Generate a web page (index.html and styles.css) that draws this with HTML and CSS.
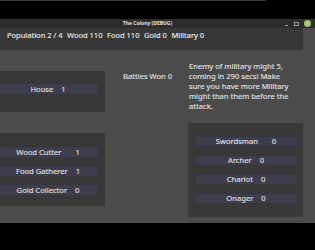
FILE: index.html
```html
<!DOCTYPE html>
<html>
<head>
<meta charset="utf-8">
<link rel="stylesheet" href="styles.css">
</head>
<body>
<div class="topline"></div>
<div class="titlebar">
  <div class="title">The Colony (DEBUG)</div>
  <div class="wbtns">
    <span class="wmin"></span>
    <span class="wmax"></span>
    <span class="wclose"><svg width="7" height="7" viewBox="0 0 7 7"><circle cx="3.5" cy="3.5" r="3.3" fill="#93b84f" stroke="#b5d67a" stroke-width="0.6"/><path d="M2.3 2.3 L4.7 4.7 M4.7 2.3 L2.3 4.7" stroke="#ffffff" stroke-width="0.8"/></svg></span>
  </div>
</div>
<div class="window">
  <div class="stats">
    <span>Population 2 / 4</span>
    <span>Wood 110</span>
    <span>Food 110</span>
    <span>Gold 0</span>
    <span>Military 0</span>
  </div>
  <div class="content">
    <div class="leftcol">
      <div class="panel p-house">
        <div class="btn"><span>House</span><span>1</span></div>
      </div>
      <div class="panel p-workers">
        <div class="btn wide"><span>Wood Cutter</span><span>1</span></div>
        <div class="btn"><span>Food Gatherer</span><span>1</span></div>
        <div class="btn"><span>Gold Collector</span><span>0</span></div>
      </div>
    </div>
    <div class="midcol">Battles Won 0</div>
    <div class="rightcol">
      <div class="warning">Enemy of military might 5,<br>coming in 290 secs! Make<br>sure you have more Military<br>might than them before the<br>attack.</div>
      <div class="panel p-army">
        <div class="btn sm wide"><span>Swordsman</span><span>0</span></div>
        <div class="btn sm"><span>Archer</span><span>0</span></div>
        <div class="btn sm"><span>Chariot</span><span>0</span></div>
        <div class="btn sm"><span>Onager</span><span>0</span></div>
      </div>
    </div>
  </div>
</div>
</body>
</html>
```

FILE: styles.css
```css
html, body {
  margin: 0;
  padding: 0;
  background: #000;
}
body {
  width: 315px;
  height: 250px;
  overflow: hidden;
  font-family: "Noto Sans", "Open Sans", sans-serif;
  color: #e2e2e2;
}
.topline {
  width: 266px;
  height: 1px;
  background: #3a3a3a;
}
.titlebar {
  margin-top: 18px;
  height: 9px;
  background: #2c2c2c;
  display: flex;
  align-items: center;
}
.title {
  flex: 1;
  text-align: center;
  padding-left: 10px;
  font-size: 5px;
  font-weight: bold;
  line-height: 9px;
  color: #e6e6e6;
}
.wbtns {
  display: flex;
  align-items: center;
  padding-right: 4px;
}
.wmin {
  width: 3px;
  height: 1px;
  background: #9a9a9a;
  margin-top: 3px;
  margin-right: 6px;
}
.wmax {
  width: 3px;
  height: 2px;
  border: 1px solid #9a9a9a;
  margin-right: 5px;
}
.wclose {
  width: 7px;
  height: 7px;
  display: flex;
}
.window {
  height: 195px;
  background: #4b4b4b;
  display: flex;
  flex-direction: column;
}
.stats {
  width: 303px;
  height: 22px;
  box-sizing: border-box;
  background: #373737;
  display: flex;
  gap: 4.6px;
  padding: 1.8px 0 0 7px;
  font-size: 7.5px;
  line-height: 10px;
  color: #eeeeee;
  -webkit-text-stroke: 0.12px #eeeeee;
}
.content {
  display: flex;
  flex: 1;
}
.leftcol {
  width: 115px;
  margin-left: -10px;
  padding-top: 21px;
  display: flex;
  flex-direction: column;
  gap: 21px;
  flex-shrink: 0;
}
.panel {
  background: #393737;
  display: flex;
  flex-direction: column;
  box-sizing: border-box;
}
.p-house {
  height: 41px;
  padding: 12px 6px 0 7px;
}
.p-workers {
  height: 73px;
  padding: 13px 6px 0 7px;
  gap: 7px;
}
.btn {
  height: 12px;
  box-sizing: border-box;
  background: #3e3d4b;
  border: 1px solid #353441;
  display: flex;
  justify-content: center;
  align-items: center;
  gap: 8px;
  font-size: 7.6px;
  line-height: 10px;
  color: #e0e0e0;
  -webkit-text-stroke: 0.12px #e0e0e0;
}
.btn.wide {
  gap: 14px;
}
.btn.sm {
  height: 11px;
}
.midcol {
  width: 83px;
  flex-shrink: 0;
  box-sizing: border-box;
  padding: 20.8px 0 0 18px;
  font-size: 7.6px;
  line-height: 10px;
  -webkit-text-stroke: 0.12px #e2e2e2;
}
.rightcol {
  width: 115px;
  flex-shrink: 0;
  padding-top: 10.8px;
}
.warning {
  padding-left: 1px;
  font-size: 7.6px;
  line-height: 10px;
  height: 50px;
  white-space: nowrap;
  -webkit-text-stroke: 0.12px #e2e2e2;
}
.p-army {
  margin-top: 12.2px;
  height: 94px;
  padding: 13px 6px 0 7px;
  gap: 8px;
}
```
